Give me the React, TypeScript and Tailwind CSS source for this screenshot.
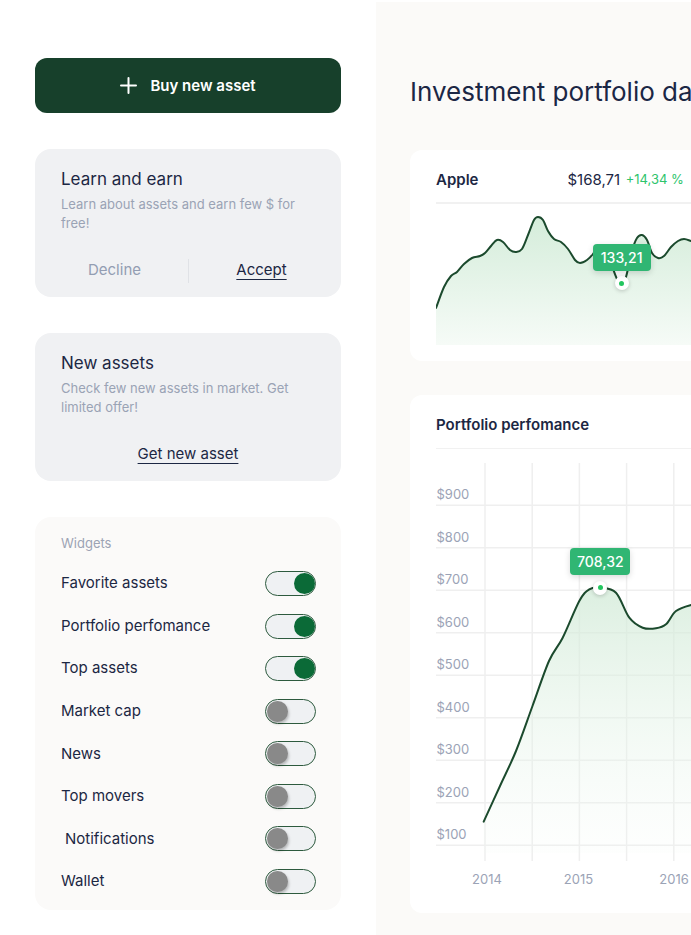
import React from "react";

type Pt = [number, number];

function smooth(pts: Pt[]): string {
  let d = `M${pts[0][0]},${pts[0][1]}`;
  for (let i = 0; i < pts.length - 1; i++) {
    const p0 = pts[i - 1] || pts[i];
    const p1 = pts[i];
    const p2 = pts[i + 1];
    const p3 = pts[i + 2] || p2;
    const c1x = p1[0] + (p2[0] - p0[0]) / 6;
    const c1y = p1[1] + (p2[1] - p0[1]) / 6;
    const c2x = p2[0] - (p3[0] - p1[0]) / 6;
    const c2y = p2[1] - (p3[1] - p1[1]) / 6;
    d += ` C${c1x.toFixed(2)},${c1y.toFixed(2)} ${c2x.toFixed(2)},${c2y.toFixed(2)} ${p2[0]},${p2[1]}`;
  }
  return d;
}

const applePts: Pt[] = [
  [0, 97], [8, 76], [15, 65], [21, 61], [28, 53], [36, 47], [44, 45], [49, 42],
  [55, 35], [61, 29], [67, 31], [74, 39], [80, 41], [86, 38], [92, 24], [98, 9],
  [102, 6], [107, 9], [112, 20], [118, 28], [125, 31], [132, 38], [139, 49], [144, 52],
  [151, 49], [157, 43], [162, 35], [167, 36], [174, 50], [181, 68], [185.7, 72.7],
  [190, 66], [196, 40], [201, 27], [206, 24], [211, 29], [216, 42], [222, 47],
  [228, 45], [235, 36], [242, 30], [248, 28], [255, 30], [262, 33], [275, 40], [290, 35],
];

const portPts: Pt[] = [
  [47.7, 358.7], [64, 323], [80, 288], [96.5, 243], [113, 198], [126.7, 174.7],
  [143.3, 138], [153.3, 126.3], [164.3, 124.7], [180, 129.7], [193.3, 154.7],
  [206.7, 164.7], [220, 165.3], [230, 161.3], [240, 148], [255, 142], [270, 140], [290, 145],
];

function Toggle({ on }: { on: boolean }) {
  return (
    <div
      className={`flex h-[25px] w-[51px] items-center rounded-full border-[1.5px] border-[#2d5a3e] bg-[#eff1f3] px-[0.5px] ${
        on ? "justify-end" : "justify-start"
      }`}
    >
      {on ? (
        <div className="h-[21px] w-[21px] rounded-full bg-[#0b6a37]" />
      ) : (
        <div className="h-[21px] w-[21px] rounded-full bg-[#898989] shadow-[1px_2px_3px_rgba(0,0,0,0.25)]" />
      )}
    </div>
  );
}

const widgets: { label: string; on: boolean; indent?: boolean }[] = [
  { label: "Favorite assets", on: true },
  { label: "Portfolio perfomance", on: true },
  { label: "Top assets", on: true },
  { label: "Market cap", on: false },
  { label: "News", on: false },
  { label: "Top movers", on: false },
  { label: "Notifications", on: false, indent: true },
  { label: "Wallet", on: false },
];

function AppleChart() {
  const line = smooth(applePts);
  const fill = line + " L290,134 L0,134 Z";
  return (
    <div className="relative mt-[7px] h-[134px] w-[560px]">
      <svg width="560" height="134" viewBox="0 0 560 134" className="absolute left-0 top-0">
        <defs>
          <linearGradient id="ag" x1="0" y1="0" x2="0" y2="134" gradientUnits="userSpaceOnUse">
            <stop offset="0" stopColor="#d3ecd9" />
            <stop offset="1" stopColor="#f6fbf7" />
          </linearGradient>
        </defs>
        <path d={fill} fill="url(#ag)" />
        <path d={line} fill="none" stroke="#1b4a2d" strokeWidth="2" strokeLinecap="round" strokeLinejoin="round" />
      </svg>
      <div className="absolute left-[178.7px] top-[65.7px] flex h-[14px] w-[14px] items-center justify-center rounded-full bg-white shadow-[0_1px_4px_rgba(0,0,0,0.2)]">
        <div className="h-[5px] w-[5px] rounded-full bg-[#22c55e]" />
      </div>
      <div className="absolute left-[156.7px] top-[33.3px] flex h-[27px] w-[58px] items-center justify-center rounded-[4px] bg-[#30b673] text-[14px] font-medium text-white shadow-[0_2px_6px_rgba(0,0,0,0.15)]">
        133,21
      </div>
    </div>
  );
}

function PortfolioChart() {
  const line = smooth(portPts);
  const fill = line + " L290,390 L47.7,390 Z";
  const vx = [49, 96.2, 143.4, 190.6, 237.8, 285, 332.2, 379.4, 426.6, 473.8, 521];
  const hy = [42.3, 84.8, 127.3, 169.8, 212.3, 254.8, 297.3, 339.8, 382.3];
  const labels = ["$900", "$800", "$700", "$600", "$500", "$400", "$300", "$200", "$100"];
  const years: [string, number][] = [
    ["2014", 51],
    ["2015", 142.5],
    ["2016", 238],
  ];
  return (
    <div className="relative mt-[14px] h-[430px] w-[560px]">
      <svg width="560" height="430" viewBox="0 0 560 430" className="absolute left-0 top-0">
        <defs>
          <linearGradient id="pg" x1="0" y1="120" x2="0" y2="390" gradientUnits="userSpaceOnUse">
            <stop offset="0" stopColor="#cfe9d5" stopOpacity="0.75" />
            <stop offset="1" stopColor="#eef8f0" stopOpacity="0.1" />
          </linearGradient>
        </defs>
        {vx.map((x) => (
          <line key={"v" + x} x1={x} y1={0} x2={x} y2={398} stroke="#efefef" strokeWidth="1.5" />
        ))}
        {hy.map((y) => (
          <line key={"h" + y} x1={0} y1={y} x2={560} y2={y} stroke="#efefef" strokeWidth="1.5" />
        ))}
        <path d={fill} fill="url(#pg)" />
        <path d={line} fill="none" stroke="#1b4a2d" strokeWidth="2" strokeLinecap="round" strokeLinejoin="round" />
        {labels.map((l, i) => (
          <text
            key={l}
            x={0.5}
            y={hy[i] - 6}
            fontSize="13"
            fill="#9ba3b6"
            fontFamily="Inter, 'Noto Sans', sans-serif"
          >
            {l}
          </text>
        ))}
        {years.map(([t, x]) => (
          <text
            key={t}
            x={x}
            y={420.5}
            textAnchor="middle"
            fontSize="13"
            fill="#9ba3b6"
            fontFamily="Inter, 'Noto Sans', sans-serif"
          >
            {t}
          </text>
        ))}
      </svg>
      <div className="absolute left-[157.3px] top-[117.7px] flex h-[14px] w-[14px] items-center justify-center rounded-full bg-white shadow-[0_1px_4px_rgba(0,0,0,0.2)]">
        <div className="h-[5px] w-[5px] rounded-full bg-[#22c55e]" />
      </div>
      <div className="absolute left-[134.3px] top-[84.7px] flex h-[27px] w-[60px] items-center justify-center rounded-[4px] bg-[#30b673] text-[14px] font-medium text-white shadow-[0_2px_6px_rgba(0,0,0,0.15)]">
        708,32
      </div>
    </div>
  );
}

export default function App() {
  return (
    <div
      className="flex h-[935px] w-[691px] overflow-hidden bg-white"
      style={{ fontFamily: "Inter, 'Noto Sans', sans-serif" }}
    >
      {/* Left column */}
      <div className="flex w-[376px] shrink-0 flex-col gap-[36px] px-[35px] pt-[58px]">
        <button className="flex h-[55px] w-full items-center justify-center gap-[13px] rounded-[12px] bg-[#17402b] text-[15px] font-semibold text-white">
          <svg width="17" height="17" viewBox="0 0 17 17">
            <path d="M8.5 1v15M1 8.5h15" stroke="white" strokeWidth="2" strokeLinecap="round" />
          </svg>
          <span className="mt-[1px]">Buy new asset</span>
        </button>

        <div className="flex h-[148px] flex-col rounded-[16px] bg-[#f0f1f3] px-[26px] pt-[18px]">
          <div className="text-[17px] leading-[24px] text-[#1c2743]">Learn and earn</div>
          <div className="mt-[4px] text-[13px] leading-[19px] text-[#9aa3b5]">
            Learn about assets and earn few $ for free!
          </div>
          <div className="mt-[25px] -ml-[26px] flex h-[25px] w-[306px] items-center justify-center">
            <div className="w-[146px] text-center text-[15px] text-[#939db2]">Decline</div>
            <div className="h-[24px] w-px bg-[#e0e2e6]" />
            <div className="w-[146px] text-center text-[15px] text-[#1c2743] underline decoration-1 underline-offset-[4px]">
              Accept
            </div>
          </div>
        </div>

        <div className="flex h-[148px] flex-col rounded-[16px] bg-[#f0f1f3] px-[26px] pt-[18px]">
          <div className="text-[17px] leading-[24px] text-[#1c2743]">New assets</div>
          <div className="mt-[4px] text-[13px] leading-[19px] text-[#9aa3b5]">
            Check few new assets in market. Get limited offer!
          </div>
          <div className="mt-[25px] flex h-[25px] items-center justify-center">
            <span className="text-[15px] text-[#1c2743] underline decoration-1 underline-offset-[4px]">
              Get new asset
            </span>
          </div>
        </div>

        <div className="flex h-[393px] flex-col rounded-[16px] bg-[#fbfaf9] px-[26px] pt-[17px]">
          <div className="text-[13px] leading-[19px] text-[#9ca3b4]">Widgets</div>
          <div className="mt-[18px] flex flex-col gap-[17.57px]">
            {widgets.map((w) => (
              <div key={w.label} className="flex h-[25px] items-center justify-between">
                <span className={`text-[15px] text-[#1c2743] ${w.indent ? "pl-[4px]" : ""}`}>{w.label}</span>
                <div className="mr-[-1px]">
                  <Toggle on={w.on} />
                </div>
              </div>
            ))}
          </div>
        </div>
      </div>

      {/* Right panel */}
      <div className="mt-[1.5px] flex min-w-0 flex-1 flex-col overflow-hidden bg-[#fbfaf8] pl-[34px]">
        <div className="mt-[73px] h-[34px] whitespace-nowrap text-[26px] leading-[34px] text-[#1b2745]">
          Investment portfolio dashboard
        </div>
        <div className="mt-[41.5px] flex h-[211px] w-[620px] shrink-0 flex-col rounded-[12px] bg-white pl-[26px]">
          <div className="mt-[18.5px] flex h-[23px] items-center">
            <span className="w-[131.5px] text-[15px] font-semibold text-[#1c2743]">Apple</span>
            <span className="text-[15px] text-[#1c2743]">$168,71</span>
            <span className="ml-[5.5px] text-[13px] text-[#2ec46c]">+14,34 %</span>
          </div>
          <div className="mt-[10.5px] h-[1.5px] w-full bg-[#f1f1f1]" />
          <AppleChart />
        </div>
        <div className="mt-[34px] flex h-[518px] w-[620px] shrink-0 flex-col rounded-[12px] bg-white pl-[26px]">
          <div className="mt-[18.5px] flex h-[23px] items-center">
            <span className="text-[15px] font-semibold text-[#1c2743]">Portfolio perfomance</span>
          </div>
          <div className="mt-[11px] h-[1.5px] w-full bg-[#f1f1f1]" />
          <PortfolioChart />
        </div>
      </div>
    </div>
  );
}
